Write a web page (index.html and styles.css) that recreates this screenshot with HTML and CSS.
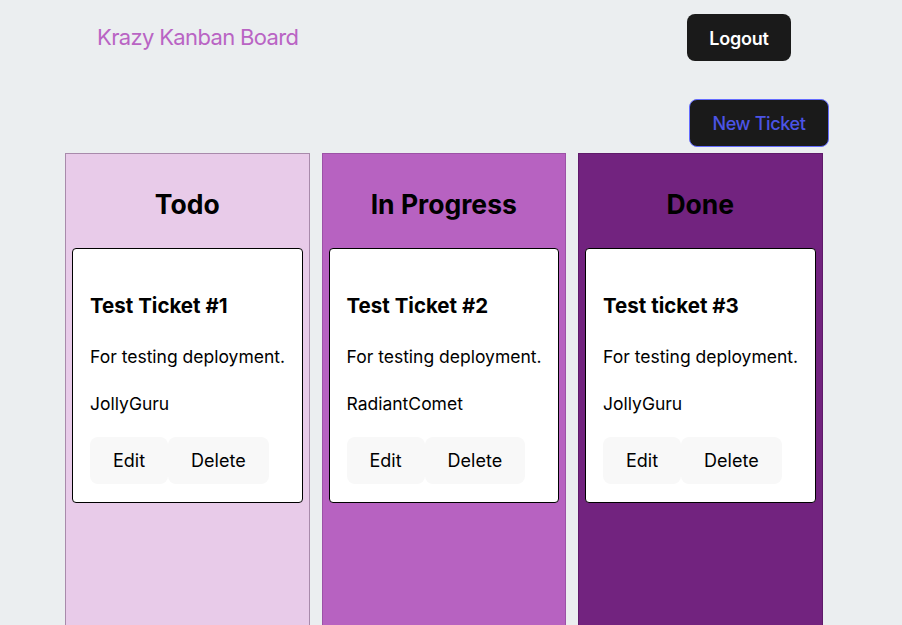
FILE: index.html
```html
<!DOCTYPE html>
<html lang="en">
<head>
<meta charset="UTF-8">
<title>Krazy Kanban Board</title>
<link rel="stylesheet" href="styles.css">
</head>
<body>
<nav class="nav">
  <h1 class="brand">Krazy Kanban Board</h1>
  <button class="btn btn-logout">Logout</button>
</nav>
<main class="main">
  <div class="toolbar">
    <button class="btn btn-new">New Ticket</button>
  </div>
  <div class="board">
    <section class="column col-todo">
      <h2 class="col-title">Todo</h2>
      <article class="card">
        <h3 class="card-title">Test Ticket #1</h3>
        <p class="card-text">For testing deployment.</p>
        <p class="card-text">JollyGuru</p>
        <div class="card-actions">
          <button class="btn btn-light">Edit</button><button class="btn btn-light">Delete</button>
        </div>
      </article>
    </section>
    <section class="column col-progress">
      <h2 class="col-title">In Progress</h2>
      <article class="card">
        <h3 class="card-title">Test Ticket #2</h3>
        <p class="card-text">For testing deployment.</p>
        <p class="card-text">RadiantComet</p>
        <div class="card-actions">
          <button class="btn btn-light">Edit</button><button class="btn btn-light">Delete</button>
        </div>
      </article>
    </section>
    <section class="column col-done">
      <h2 class="col-title">Done</h2>
      <article class="card">
        <h3 class="card-title">Test ticket #3</h3>
        <p class="card-text">For testing deployment.</p>
        <p class="card-text">JollyGuru</p>
        <div class="card-actions">
          <button class="btn btn-light">Edit</button><button class="btn btn-light">Delete</button>
        </div>
      </article>
    </section>
  </div>
</main>
</body>
</html>
```
FILE: styles.css
```css
* { box-sizing: border-box; }
html, body { margin: 0; padding: 0; }
body {
  font-family: Inter, "Noto Sans", sans-serif;
  background: #ebeef0;
  color: #000;
  height: 625px;
  overflow: hidden;
}
.nav {
  display: flex;
  align-items: center;
  justify-content: space-between;
  padding: 14px 111px 0 97px;
  height: 61px;
}
.brand {
  margin: 0;
  font-size: 22px;
  font-weight: 400;
  letter-spacing: -0.65px;
  color: #b964c4;
  line-height: 49px;
}
.btn {
  font-family: inherit;
  border-radius: 8px;
  border: 1px solid transparent;
  cursor: pointer;
}
.btn-logout {
  width: 104px;
  height: 47px;
  padding-top: 2px;
  background: #1a1a1a;
  color: #fff;
  font-size: 18px;
  font-weight: 600;
  letter-spacing: -0.2px;
}
.main {
  padding: 0 0 0 65px;
}
.toolbar {
  display: flex;
  justify-content: flex-end;
  padding: 38px 73px 6px 0;
}
.btn-new {
  width: 140px;
  height: 48px;
  background: #1a1a1a;
  color: #4c54e6;
  border-color: #646cff;
  font-size: 18px;
  font-weight: 500;
  letter-spacing: -0.35px;
}
.board {
  display: flex;
  gap: 12px;
}
.column {
  width: 244.5px;
  height: 480px;
  border: 1px solid #a88aab;
  padding: 35px 6px 0;
}
.col-todo { background: #e8cbe9; }
.col-progress { background: #b762c1; border-color: #9c52a6; }
.col-done { background: #72237f; border-color: #5f1a6a; }
.col-title {
  margin: 0 0 28px;
  text-align: center;
  font-size: 26.5px;
  font-weight: 700;
  line-height: 31px;
}
.card {
  background: #fff;
  border: 1px solid #000;
  border-radius: 4px;
  padding: 45px 8px 18px 17px;
}
.card-title {
  margin: 0;
  font-size: 20.5px;
  font-weight: 700;
  line-height: 24px;
}
.card-text {
  margin: 27px 0 0;
  font-size: 17.5px;
  line-height: 24px;
  white-space: nowrap;
}
.card-text + .card-text { margin-top: 23px; }
.card-actions {
  display: flex;
  margin-top: 21px;
}
.btn-light {
  height: 47px;
  padding: 0 22px;
  background: #f8f8f8;
  color: #000;
  font-size: 18px;
  font-weight: 400;
}
```
